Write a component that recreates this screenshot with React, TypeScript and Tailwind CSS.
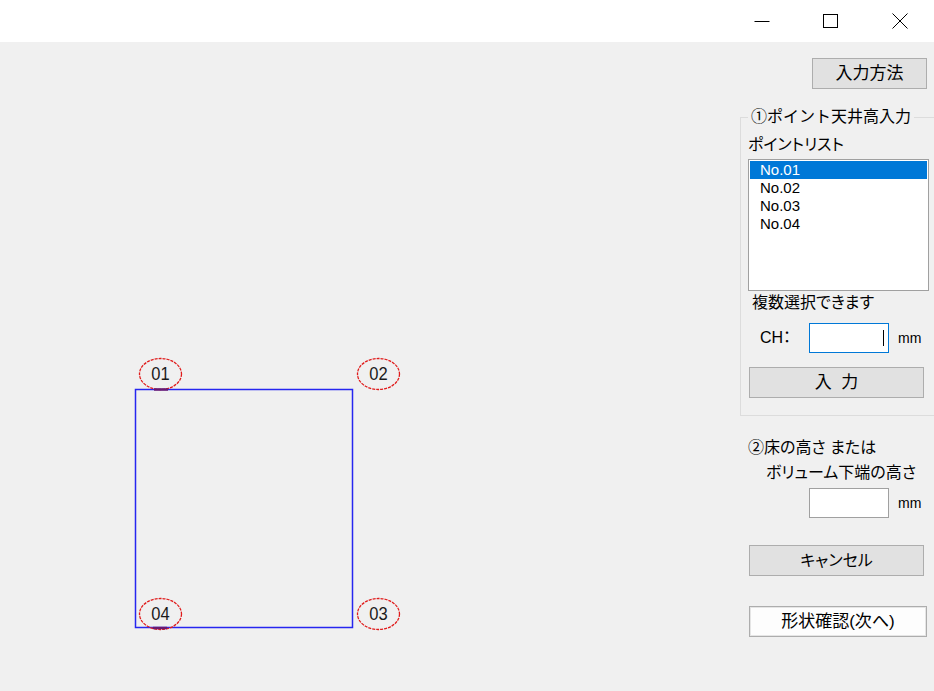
import React from "react";

const font =
  "font-['Liberation_Sans','Noto_Sans_CJK_JP',sans-serif] [font-feature-settings:'palt']";

const btn =
  "flex items-center justify-center border border-[#adadad] bg-[#e1e1e1] text-[16px] text-black";

function TitleBar() {
  return (
    <div className="flex h-[42px] justify-end bg-white">
      <div className="flex w-[69px] items-center justify-center">
        <svg width="16" height="16" viewBox="0 0 16 16">
          <line x1="0.5" y1="8.5" x2="15.5" y2="8.5" stroke="#000" strokeWidth="1" />
        </svg>
      </div>
      <div className="flex w-[69px] items-center justify-center">
        <svg width="16" height="16" viewBox="0 0 16 16">
          <rect x="0.5" y="1.5" width="14" height="13" fill="none" stroke="#000" strokeWidth="1" />
        </svg>
      </div>
      <div className="flex w-[69px] items-center justify-center">
        <svg width="16" height="16" viewBox="0 0 16 16">
          <path d="M0.5 0.5 L15.5 15.5 M15.5 0.5 L0.5 15.5" stroke="#000" strokeWidth="1" />
        </svg>
      </div>
    </div>
  );
}

const points = [
  { id: "01", x: 160.5, y: 332 },
  { id: "02", x: 378.5, y: 332 },
  { id: "03", x: 378.5, y: 572 },
  { id: "04", x: 160.5, y: 572 },
];

function Drawing() {
  return (
    <svg width="739" height="649" viewBox="0 0 739 649" className="block">
      <rect x="135.5" y="347.5" width="217" height="238" fill="none" stroke="#2626f0" strokeWidth="1.5" />
      {points.map((p) => (
        <g key={p.id}>
          <ellipse
            cx={p.x}
            cy={p.y}
            rx="21"
            ry="15.5"
            fill="none"
            stroke="#e01c1c"
            strokeWidth="1.3"
            strokeDasharray="3 1"
          />
          <text
            x={p.x}
            y={p.y + 6.5}
            textAnchor="middle"
            fontFamily="'Liberation Sans', sans-serif"
            fontSize="18"
            fill="#1a1a1a"
            transform={`translate(${p.x} 0) scale(0.92 1) translate(${-p.x} 0)`}
          >
            {p.id}
          </text>
        </g>
      ))}
      <line x1="154" y1="347.5" x2="168" y2="347.5" stroke="#6a1a70" strokeWidth="2.5" />
      <line x1="153" y1="586" x2="167" y2="586" stroke="#6a1a70" strokeWidth="2.5" />
    </svg>
  );
}

function PointList() {
  const items = ["No.01", "No.02", "No.03", "No.04"];
  return (
    <div className="mt-[5px] h-[132px] w-[181px] border border-[#a0a0a0] bg-white p-[1px]">
      {items.map((it, i) => (
        <div
          key={it}
          className={`h-[18px] pl-[10px] text-[15px] leading-[18px] ${
            i === 0 ? "bg-[#0078d7] text-white" : "text-black"
          }`}
        >
          {it}
        </div>
      ))}
    </div>
  );
}

function SidePanel() {
  return (
    <div className="flex w-[195px] shrink-0 flex-col">
      <button className={`${btn} mt-[16px] mr-[7px] h-[31px] w-[115px] self-end text-[17px]`}>
        入力方法
      </button>

      <fieldset className="mt-[19px] ml-[1px] h-[308px] w-[200px] border border-[#dcdcdc] pl-[7px]">
        <legend className="px-[3px] text-[16px] leading-[18px] [font-feature-settings:normal]">
          ①ポイント天井高入力
        </legend>
        <div className="mt-[10px] text-[16px] leading-[18px]">ポイントリスト</div>
        <PointList />
        <div className="mt-[3px] ml-[4px] text-[16px] leading-[18px]">複数選択できます</div>
        <div className="mt-[11px] flex items-center">
          <span className="ml-[12px] w-[49px] text-[16px]">CH：</span>
          <div className="flex h-[30px] w-[80px] items-center justify-end border border-[#0078d7] bg-white pr-[4px]">
            <span className="h-[16px] w-px bg-black" />
          </div>
          <span className="ml-[9px] text-[14px]">mm</span>
        </div>
        <button className={`${btn} mt-[14px] ml-[1px] h-[31px] w-[175px] text-[17px]`}>
          入&nbsp;&nbsp;力
        </button>
      </fieldset>

      <div className="mt-[23px] ml-[9px] text-[16px] leading-[18px]">②床の高さ または</div>
      <div className="mt-[7px] ml-[27px] text-[16px] leading-[18px]">ボリューム下端の高さ</div>
      <div className="mt-[6px] ml-[70px] flex items-center">
        <div className="h-[30px] w-[80px] border border-[#a0a0a0] bg-white" />
        <span className="ml-[9px] text-[14px]">mm</span>
      </div>
      <button className={`${btn} mt-[27px] ml-[10px] h-[31px] w-[175px]`}>キャンセル</button>
      <button
        className={`${btn} mt-[30px] ml-[10px] h-[31px] w-[178px] bg-[#fdfdfd] shadow-[inset_0_0_0_1px_#e5e5e5] text-[17px]`}
      >
        形状確認(次へ)
      </button>
    </div>
  );
}

export default function App() {
  return (
    <div className={`${font} h-[691px] w-[934px] overflow-hidden bg-[#f0f0f0] text-black`}>
      <TitleBar />
      <div className="flex h-[649px]">
        <div className="flex-1">
          <Drawing />
        </div>
        <SidePanel />
      </div>
    </div>
  );
}
